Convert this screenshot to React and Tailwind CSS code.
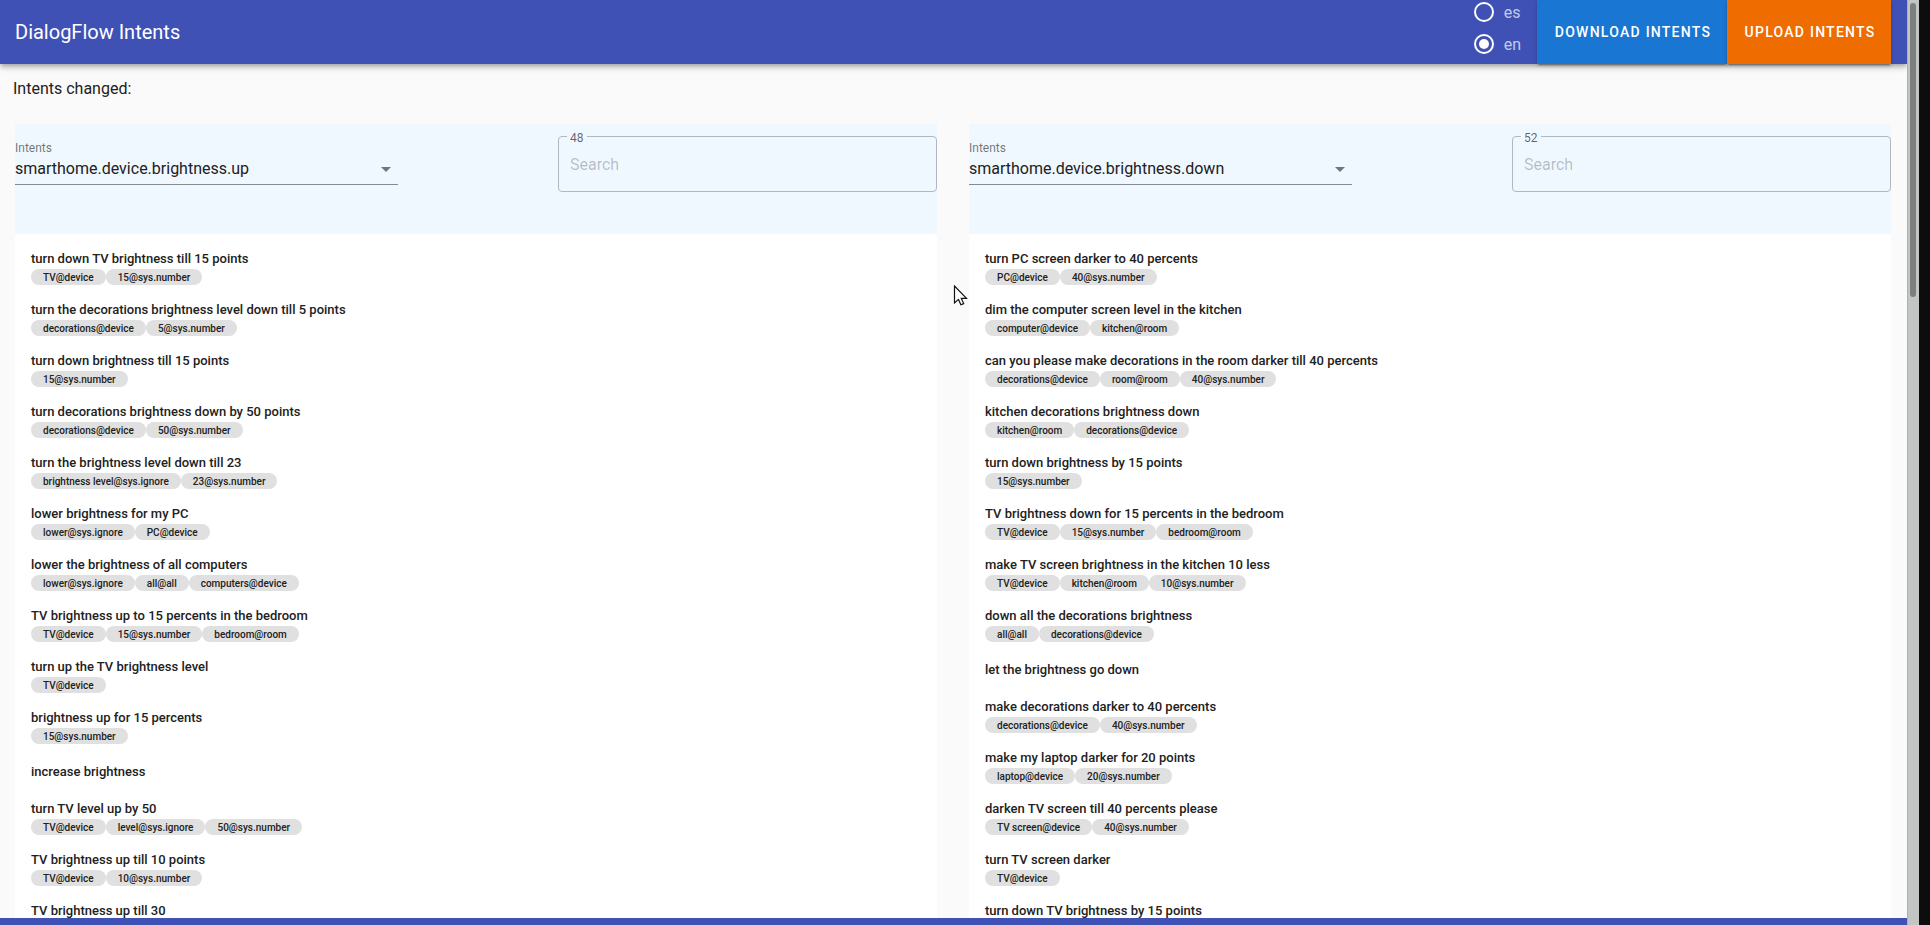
const leftItems = [
  ["turn down TV brightness till 15 points", ["TV@device", "15@sys.number"]],
  ["turn the decorations brightness level down till 5 points", ["decorations@device", "5@sys.number"]],
  ["turn down brightness till 15 points", ["15@sys.number"]],
  ["turn decorations brightness down by 50 points", ["decorations@device", "50@sys.number"]],
  ["turn the brightness level down till 23", ["brightness level@sys.ignore", "23@sys.number"]],
  ["lower brightness for my PC", ["lower@sys.ignore", "PC@device"]],
  ["lower the brightness of all computers", ["lower@sys.ignore", "all@all", "computers@device"]],
  ["TV brightness up to 15 percents in the bedroom", ["TV@device", "15@sys.number", "bedroom@room"]],
  ["turn up the TV brightness level", ["TV@device"]],
  ["brightness up for 15 percents", ["15@sys.number"]],
  ["increase brightness", []],
  ["turn TV level up by 50", ["TV@device", "level@sys.ignore", "50@sys.number"]],
  ["TV brightness up till 10 points", ["TV@device", "10@sys.number"]],
  ["TV brightness up till 30", []],
];

const rightItems = [
  ["turn PC screen darker to 40 percents", ["PC@device", "40@sys.number"]],
  ["dim the computer screen level in the kitchen", ["computer@device", "kitchen@room"]],
  ["can you please make decorations in the room darker till 40 percents", ["decorations@device", "room@room", "40@sys.number"]],
  ["kitchen decorations brightness down", ["kitchen@room", "decorations@device"]],
  ["turn down brightness by 15 points", ["15@sys.number"]],
  ["TV brightness down for 15 percents in the bedroom", ["TV@device", "15@sys.number", "bedroom@room"]],
  ["make TV screen brightness in the kitchen 10 less", ["TV@device", "kitchen@room", "10@sys.number"]],
  ["down all the decorations brightness", ["all@all", "decorations@device"]],
  ["let the brightness go down", []],
  ["make decorations darker to 40 percents", ["decorations@device", "40@sys.number"]],
  ["make my laptop darker for 20 points", ["laptop@device", "20@sys.number"]],
  ["darken TV screen till 40 percents please", ["TV screen@device", "40@sys.number"]],
  ["turn TV screen darker", ["TV@device"]],
  ["turn down TV brightness by 15 points", []],
];

function Radio({ label, checked }) {
  return (
    <div className="flex h-8 shrink-0 items-center">
      <svg width="24" height="24" viewBox="0 0 24 24" fill="none">
        <circle cx="12" cy="12" r="9" stroke="#fff" strokeWidth="2" />
        {checked && <circle cx="12" cy="12" r="5" fill="#fff" />}
      </svg>
      <span className="ml-2 pt-px text-base leading-5 text-white/70">{label}</span>
    </div>
  );
}

function Item({ title, tags, last }) {
  return (
    <div className={"flex flex-col px-4 " + (tags.length || last ? "h-[51px] pt-[9px]" : "h-10 justify-center")}>
      <div className="text-[13px] leading-4 font-medium whitespace-nowrap">{title}</div>
      {tags.length > 0 && (
        <div className="mt-0.5 flex">
          {tags.map((t) => (
            <span key={t} className="h-4 rounded-full bg-[#e0e0e0] px-3 text-[10px] leading-[17px] font-medium whitespace-nowrap">
              {t}
            </span>
          ))}
        </div>
      )}
    </div>
  );
}

function Panel({ intent, count, items }) {
  return (
    <section className="flex w-[922px] flex-col bg-white">
      <div className="flex h-[110px] shrink-0 items-start justify-between bg-[#f0f8ff] pt-3">
        <div className="flex h-[49px] w-[383px] flex-col border-b border-[#868b8f] pt-0.5">
          <span className="text-xs leading-5 text-black/55">Intents</span>
          <div className="mt-px flex items-center justify-between pr-[7px]">
            <span className="text-base leading-5">{intent}</span>
            <svg width="10" height="5" viewBox="0 0 10 5">
              <path d="M0 0h10L5 5z" fill="#737679" />
            </svg>
          </div>
        </div>
        <fieldset className="-mt-2 h-16 w-[379px] rounded border border-[#b2b8bf] pl-2">
          <legend className="h-[17px] px-[3px] text-xs leading-[21px] text-black/60">{count}</legend>
          <div className="mt-2.5 pl-[3px] text-base leading-5 text-black/25">Search</div>
        </fieldset>
      </div>
      <div className="flex flex-col pt-2">
        {items.map(([title, tags], i) => (
          <Item key={title} title={title} tags={tags} last={i === items.length - 1} />
        ))}
      </div>
    </section>
  );
}

export default function App() {
  return (
    <div className="relative flex h-[925px] w-[1930px] overflow-hidden bg-[#0d0d0d] font-['Roboto',sans-serif] text-[#212121]">
      <div className="flex h-full w-[1907px] flex-col overflow-hidden bg-[#fafafa]">
        <header className="z-10 flex h-16 shrink-0 items-center bg-[#3f51b5] pr-4 pl-[15px] text-white shadow-[0_2px_4px_-1px_rgba(0,0,0,0.2),0_4px_5px_0_rgba(0,0,0,0.14),0_1px_10px_0_rgba(0,0,0,0.12)]">
          <h1 className="flex-1 text-xl">DialogFlow Intents</h1>
          <div className="mr-4 flex flex-col -translate-y-1">
            <Radio label="es" />
            <Radio label="en" checked />
          </div>
          <button className="h-16 w-[190px] bg-[#1976d2] pl-0.5 text-sm font-medium tracking-[0.0892857143em] whitespace-nowrap shadow-[0_3px_1px_-2px_rgba(0,0,0,0.2),0_2px_2px_0_rgba(0,0,0,0.14),0_1px_5px_0_rgba(0,0,0,0.12)]">
            DOWNLOAD INTENTS
          </button>
          <button className="h-16 w-[164px] bg-[#ef6c00] pl-0.5 text-sm font-medium tracking-[0.0892857143em] whitespace-nowrap shadow-[0_3px_1px_-2px_rgba(0,0,0,0.2),0_2px_2px_0_rgba(0,0,0,0.14),0_1px_5px_0_rgba(0,0,0,0.12)]">
            UPLOAD INTENTS
          </button>
        </header>
        <div className="h-[60px] shrink-0 pt-[13px] pl-[13px] text-base">Intents changed:</div>
        <main className="flex min-h-0 flex-1 gap-8 overflow-hidden pl-[15px]">
          <Panel intent="smarthome.device.brightness.up" count="48" items={leftItems} />
          <Panel intent="smarthome.device.brightness.down" count="52" items={rightItems} />
        </main>
        <footer className="h-[7px] shrink-0 bg-[#3f51b5]" />
      </div>
      <div className="h-full w-3 border-l border-[#aeb0af] bg-[#c3c5c4] pt-[3px] pl-0.5">
        <div className="h-[294px] w-1.5 rounded-full bg-[#7b7f7e]" />
      </div>
      <svg className="absolute top-[285px] left-[953px]" width="15" height="21" viewBox="0 0 15 21">
        <path d="M1.5 1v17l4-3.6 2.4 5.4 2.8-1.2-2.4-5.2h5.2z" fill="#fff" stroke="#111" strokeWidth="1.2" />
      </svg>
    </div>
  );
}
